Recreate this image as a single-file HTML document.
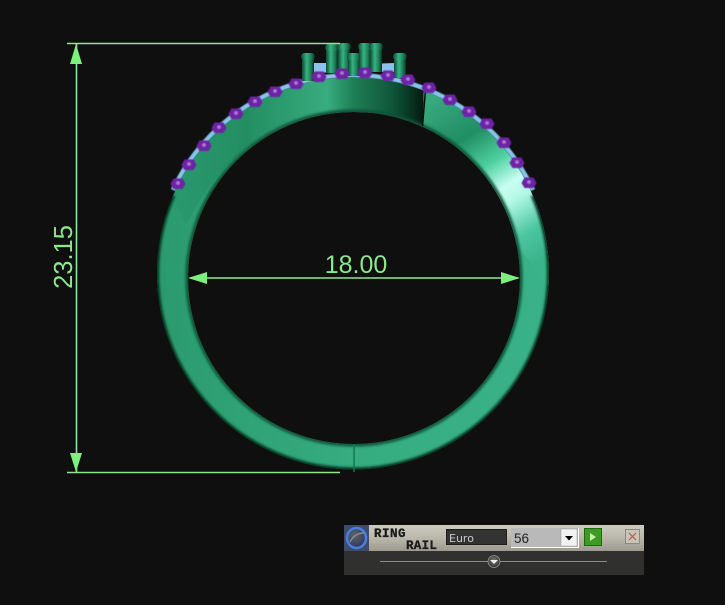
<!DOCTYPE html>
<html><head><meta charset="utf-8">
<style>
html,body{margin:0;padding:0;background:#0f0f0f;width:725px;height:605px;overflow:hidden}
svg{position:absolute;left:0;top:0}
</style></head>
<body>
<svg width="725" height="605" viewBox="0 0 725 605" xmlns="http://www.w3.org/2000/svg">
<defs>
<linearGradient id="base" x1="0" y1="0" x2="1" y2="0">
<stop offset="0" stop-color="#2a9a6e"/><stop offset=".5" stop-color="#36ac80"/><stop offset="1" stop-color="#3ab28a"/>
</linearGradient>
<linearGradient id="top" gradientUnits="userSpaceOnUse" x1="170" y1="0" x2="424" y2="0">
<stop offset="0" stop-color="#2a9a6e"/><stop offset=".3" stop-color="#238e62"/><stop offset=".62" stop-color="#38ac7e"/><stop offset=".72" stop-color="#1f8056"/><stop offset=".88" stop-color="#0f5438"/><stop offset="1" stop-color="#031a10"/>
</linearGradient>
<linearGradient id="right" gradientUnits="userSpaceOnUse" x1="430" y1="100" x2="535" y2="265">
<stop offset="0" stop-color="#38aa80"/><stop offset=".26" stop-color="#218e64"/><stop offset=".44" stop-color="#4fd0a0"/><stop offset=".58" stop-color="#c8fff2"/><stop offset=".66" stop-color="#b4f8e4"/><stop offset=".84" stop-color="#4cc6a0"/><stop offset="1" stop-color="#3ab28a"/>
</linearGradient>
<linearGradient id="prong" x1="0" y1="0" x2="1" y2="0">
<stop offset="0" stop-color="#0c4a32"/><stop offset=".4" stop-color="#36b484"/><stop offset=".75" stop-color="#1b7a55"/><stop offset="1" stop-color="#073020"/>
</linearGradient>
<linearGradient id="bar" x1="0" y1="0" x2="0" y2="1">
<stop offset="0" stop-color="#cdcbc0"/><stop offset=".5" stop-color="#bab8ab"/><stop offset="1" stop-color="#9c9a8f"/>
</linearGradient>
<radialGradient id="orb" cx=".4" cy=".35" r=".7">
<stop offset="0" stop-color="#5a6272"/><stop offset=".7" stop-color="#3a4660"/><stop offset="1" stop-color="#26345a"/>
</radialGradient>
<radialGradient id="knob" cx=".5" cy=".4" r=".6">
<stop offset="0" stop-color="#777"/><stop offset="1" stop-color="#333"/>
</radialGradient>
<filter id="b1" filterUnits="userSpaceOnUse" x="140" y="60" width="430" height="430"><feGaussianBlur stdDeviation="1.300"/></filter>
<filter id="b05" filterUnits="userSpaceOnUse" x="140" y="40" width="430" height="200"><feGaussianBlur stdDeviation=".5"/></filter>
<g id="st">
<path d="M-7.500,0 L-4.500,-5.500 L4.500,-5.500 L7.500,0 L4.500,5 L-4.500,5 Z" fill="#6e22a6"/>
<circle cx="0" cy="-1" r="1.800" fill="#b27ad4"/>
</g>
<clipPath id="ringClip">
<path clip-rule="evenodd" d="M157,273.500a196,196 0 1,0 392,0a196,196 0 1,0 -392,0ZM188,278a166,166 0 1,0 332,0a166,166 0 1,0 -332,0Z"/>
</clipPath>
</defs>

<rect width="725" height="605" fill="#0f0f0f"/>

<!-- blue band -->
<path d="M173,190 A198.500,198.500 0 0 1 533,190" fill="none" stroke="#86c4ec" stroke-width="4.500" filter="url(#b05)"/>

<!-- ring -->
<g clip-path="url(#ringClip)">
<rect x="150" y="70" width="410" height="410" fill="url(#base)"/>
<path d="M168,190 L168,60 L424,60 L423,126 C390,115 370,112 354,112 C290,112 230,140 186,225 Z" fill="url(#top)"/>
<path d="M425,85 L422,126 L560,300 L560,90 Z" fill="url(#right)"/>
<path d="M172.300,195 A197,197 0 1 0 533.700,195" fill="none" stroke="#06301f" stroke-width="6" filter="url(#b1)"/>
<circle cx="354" cy="278" r="166.500" fill="none" stroke="#0a5238" stroke-width="4" filter="url(#b1)"/>
<path d="M425.500,90 L422.500,126" stroke="#0a0a0a" stroke-width="1.500" fill="none"/>
</g>
<!-- seam -->
<path d="M354,444 V472" stroke="#0e7a52" stroke-width="1.500" fill="none"/>

<!-- plates -->
<path d="M313,63 L328,63 L336,60 L337,72 L313,73Z" fill="#8cc0ee"/>
<path d="M370,64 L394,63 L394,72 L370,72Z" fill="#8cc0ee"/>
<path d="M336,68 L362,66 L362,72 L336,73Z" fill="#6a9ecc"/>

<!-- prongs -->
<g fill="url(#prong)">
<rect x="302" y="58" width="12" height="23"/><rect x="301" y="53" width="14" height="7" rx="3.500"/>
<rect x="326" y="49" width="12" height="24"/><rect x="325" y="44" width="14" height="7" rx="3.500"/>
<rect x="338" y="48" width="12" height="24"/><rect x="337" y="43" width="14" height="7" rx="3.500"/>
<rect x="348" y="58" width="12" height="18"/><rect x="347" y="53" width="14" height="7" rx="3.500"/>
<rect x="359" y="48" width="12" height="24"/><rect x="358" y="43" width="14" height="7" rx="3.500"/>
<rect x="370" y="48" width="12" height="24"/><rect x="369" y="43" width="14" height="7" rx="3.500"/>
<rect x="394" y="58" width="12" height="20"/><rect x="393" y="53" width="14" height="7" rx="3.500"/>
</g>

<!-- stones -->
<g filter="url(#b05)">
<use href="#st" x="178" y="184"/>
<use href="#st" x="189" y="165"/>
<use href="#st" x="204" y="146"/>
<use href="#st" x="219" y="128"/>
<use href="#st" x="236" y="114"/>
<use href="#st" x="255" y="102"/>
<use href="#st" x="275" y="92"/>
<use href="#st" x="296" y="84"/>
<use href="#st" x="319" y="77"/>
<use href="#st" x="342" y="74"/>
<use href="#st" x="365" y="73"/>
<use href="#st" x="388" y="76"/>
<use href="#st" x="408" y="80"/>
<use href="#st" x="429" y="88"/>
<use href="#st" x="450" y="100"/>
<use href="#st" x="469" y="112"/>
<use href="#st" x="487" y="124"/>
<use href="#st" x="504" y="143"/>
<use href="#st" x="517" y="163"/>
<use href="#st" x="529" y="183"/>
</g>

<!-- dimensions -->
<g stroke="#90e690" stroke-width="1.600" fill="none">
<path d="M67,43.500 H340"/>
<path d="M67,472.500 H340"/>
<path d="M76.500,44 V472"/>
<path d="M190,278 H518"/>
</g>
<g fill="#7cf07c">
<path d="M76,44 L70,64 L82,64Z"/>
<path d="M76,472 L70,453 L82,453Z"/>
<path d="M188,278 L207,272 L207,284Z"/>
<path d="M520,278 L501,272 L501,284Z"/>
</g>
<text x="356" y="273" font-family="Liberation Sans, sans-serif" font-size="25" fill="#8ae88a" text-anchor="middle">18.00</text>
<text transform="translate(72,257) rotate(-90)" font-family="Liberation Sans, sans-serif" font-size="25.500" fill="#8ae88a" text-anchor="middle">23.15</text>

<!-- panel -->
<rect x="344" y="525" width="300" height="50" fill="#30302e"/>
<rect x="344" y="525" width="300" height="26" fill="url(#bar)"/>
<rect x="344" y="525" width="25" height="26" fill="#3e4c6c"/>
<ellipse cx="356.500" cy="538" rx="9.500" ry="10" fill="url(#orb)" stroke="#4a7ee0" stroke-width="2.500"/>
<path d="M350,542 C353,536 358,533 364,533" stroke="#8a8a8a" stroke-width="1.500" fill="none"/>
<text x="374" y="537" font-family="Liberation Mono, monospace" font-weight="bold" font-size="12.500" fill="#1a1a1a" stroke="#1a1a1a" stroke-width=".3" letter-spacing=".5">RING</text>
<text x="406" y="549" font-family="Liberation Mono, monospace" font-weight="bold" font-size="12.500" fill="#1a1a1a" stroke="#1a1a1a" stroke-width=".3" letter-spacing=".3">RAIL</text>
<rect x="446.500" y="529.500" width="60" height="15" fill="#333" stroke="#1c1c1c"/>
<text x="449" y="542" font-family="DejaVu Sans, sans-serif" font-size="11" fill="#c8c8c8">Euro</text>
<rect x="511" y="528" width="68" height="20" fill="#fff"/>
<rect x="511" y="528" width="67" height="19" fill="#b9b9b9"/>
<text x="514" y="543" font-family="Liberation Sans, sans-serif" font-size="13.500" fill="#222">56</text>
<rect x="561" y="529" width="16" height="17" fill="#f2f2f2" stroke="#999" stroke-width=".5"/>
<path d="M565,536 H573 L569,540.500Z" fill="#000"/>
<rect x="584.500" y="528.500" width="17" height="17" fill="#3d9a22" stroke="#22660f"/>
<path d="M590,533 L596,537 L590,541Z" fill="#c8f0a8"/>
<rect x="625.500" y="529.500" width="14" height="14" fill="#c8c4b8" stroke="#8a8a80"/>
<path d="M629,533 L636,540 M636,533 L629,540" stroke="#b5504a" stroke-width="1" fill="none"/>
<path d="M380,561.500 H607" stroke="#8a8a8a" stroke-width="1"/>
<circle cx="494" cy="561.500" r="6" fill="url(#knob)" stroke="#999" stroke-width=".8"/>
<path d="M490,560 H498 L494,564Z" fill="#eee"/>
</svg>
</body></html>
